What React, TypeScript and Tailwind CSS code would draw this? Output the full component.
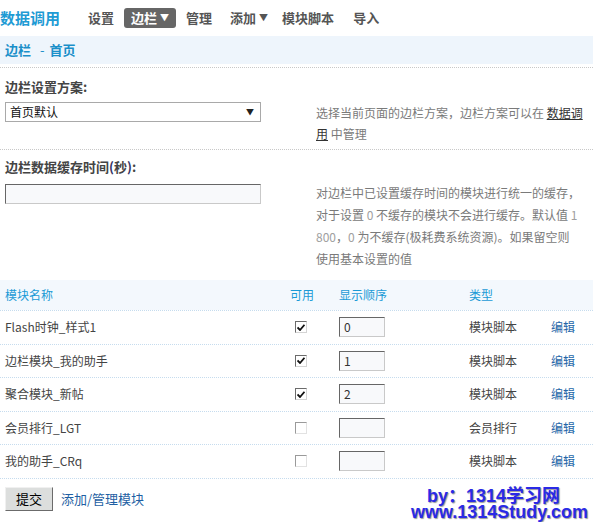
import React from 'react';

const font = { fontFamily: '"Noto Sans CJK SC", "Liberation Sans", sans-serif' };

type Row = { name: string; on: boolean; order: string; type: string };

const rows: Row[] = [
  { name: 'Flash时钟_样式1', on: true, order: '0', type: '模块脚本' },
  { name: '边栏模块_我的助手', on: true, order: '1', type: '模块脚本' },
  { name: '聚合模块_新帖', on: true, order: '2', type: '模块脚本' },
  { name: '会员排行_LGT', on: false, order: '', type: '会员排行' },
  { name: '我的助手_CRq', on: false, order: '', type: '模块脚本' },
];

const Check: React.FC<{ on: boolean }> = ({ on }) =>
  on ? (
    <span className="flex h-[12px] w-[12px] items-center justify-center border border-t-[#6b6b6b] border-l-[#6b6b6b] border-r-[#d4d4d4] border-b-[#d4d4d4] bg-white">
      <svg width="8" height="7" viewBox="0 0 8 7">
        <path d="M0.5 3.5 L3 6 L7.5 0.8" fill="none" stroke="#111" strokeWidth="1.8" />
      </svg>
    </span>
  ) : (
    <span className="block h-[12px] w-[12px] border border-t-[#9a9a9a] border-l-[#9a9a9a] border-r-[#e2e2e2] border-b-[#e2e2e2] bg-white" />
  );

const NavItem: React.FC<{ label: string; drop?: boolean; active?: boolean; className?: string }> = ({
  label,
  drop,
  active,
  className = '',
}) => (
  <span
    className={`flex h-[20px] items-center rounded-[3px] text-[13px] font-bold ${
      active ? 'bg-[#666666] px-[7px] text-white' : 'text-[#555555]'
    } ${className}`}
  >
    {label}
    {drop && <span className="ml-[3px] text-[9px]">▼</span>}
  </span>
);

export default function App() {
  return (
    <div className="relative h-[522px] w-[593px] overflow-hidden bg-white text-[12px] text-[#333333]" style={font}>
      {/* top nav */}
      <div className="flex h-[36px] items-center">
        <span className="mr-[28px] text-[15px] font-bold text-[#1f9bd4]">数据调用</span>
        <NavItem label="设置" className="mr-[10px]" />
        <NavItem label="边栏" drop active className="mr-[10px]" />
        <NavItem label="管理" className="mr-[18px]" />
        <NavItem label="添加" drop className="mr-[14px]" />
        <NavItem label="模块脚本" className="mr-[19px]" />
        <NavItem label="导入" />
      </div>

      {/* breadcrumb */}
      <div className="flex h-[28px] items-center bg-[#eef5fc] pl-[5px] text-[13px] font-bold text-[#1a8fc9]">
        边栏<span className="ml-[9px] mr-[5px] font-normal">-</span>首页
      </div>

      {/* section 1 */}
      <div className="mt-[3px] border-t border-dotted border-[#c8c8c8] px-[5px] pb-[5px] pt-[10px]">
        <div className="h-[18px] text-[13px] font-bold leading-[18px] text-[#444444]">边栏设置方案:</div>
        <div className="mt-[6px] flex">
          <div className="flex h-[20px] w-[256px] items-center justify-between border border-[#a9a9a9] bg-white pl-[4px] pr-[6px]">
            <span className="text-[12px] text-[#111111]">首页默认</span>
            <span className="text-[8px] text-[#222222]">▼</span>
          </div>
          <div className="ml-[55px] w-[272px] leading-[21px] text-[#7a7a7a]">
            <div>
              选择当前页面的边栏方案，边栏方案可以在{' '}
              <span className="text-[#333333] underline">数据调</span>
            </div>
            <div>
              <span className="text-[#333333] underline">用</span> 中管理
            </div>
          </div>
        </div>
      </div>

      {/* section 2 */}
      <div className="border-t border-dotted border-[#c8c8c8] px-[5px] pt-[8px]">
        <div className="h-[18px] text-[13px] font-bold leading-[18px] text-[#444444]">
          边栏数据缓存时间<span className="text-[#333366]">(</span>秒<span className="text-[#333366]">)</span>:
        </div>
        <div className="mt-[6px] flex">
          <div className="mt-[2px] h-[20px] w-[256px] border border-t-[#666666] border-l-[#666666] border-r-[#c9c9c9] border-b-[#c9c9c9] bg-[#f8f9fb]" />
          <div className="ml-[55px] w-[272px] leading-[22px] text-[#7a7a7a]">
            <div>对边栏中已设置缓存时间的模块进行统一的缓存，</div>
            <div>
              对于设置 <span className="text-[#a0a0a0]">0</span> 不缓存的模块不会进行缓存。默认值{' '}
              <span className="text-[#a0a0a0]">1</span>
            </div>
            <div>
              <span className="text-[#a0a0a0]">800</span>，<span className="text-[#a0a0a0]">0</span>{' '}
              为不缓存(极耗费系统资源)。如果留空则
            </div>
            <div>使用基本设置的值</div>
          </div>
        </div>
      </div>

      {/* table */}
      <div className="mt-[10px]">
        <div className="grid h-[30px] grid-cols-[290px_49px_130px_82px_1fr] items-center bg-[#f3f8fd] text-[12px] text-[#1a9ad6]">
          <span className="pl-[5px]">模块名称</span>
          <span>可用</span>
          <span>显示顺序</span>
          <span>类型</span>
          <span />
        </div>
        {rows.map((r) => (
          <div
            key={r.name}
            className="grid h-[33.5px] grid-cols-[290px_49px_130px_82px_1fr] items-center border-t border-dotted border-[#c6dcee] text-[12px] text-[#444444]"
          >
            <span className="pl-[5px]">{r.name}</span>
            <span className="pl-[5px]">
              <Check on={r.on} />
            </span>
            <span>
              <span className="flex h-[20px] w-[46px] items-center border border-t-[#666666] border-l-[#666666] border-r-[#c9c9c9] border-b-[#c9c9c9] bg-[#f8f9fb] pl-[4px] text-[12px] text-[#333333]">
                {r.order}
              </span>
            </span>
            <span>{r.type}</span>
            <span className="text-[#2667a8]">编辑</span>
          </div>
        ))}
        <div className="border-t border-dotted border-[#c6dcee]" />
      </div>

      {/* footer */}
      <div className="mt-[8px] flex items-center pl-[5px]">
        <span className="flex h-[24px] w-[48px] items-center justify-center border border-t-[#f0f0f0] border-l-[#f0f0f0] border-r-[#6b6b6b] border-b-[#6b6b6b] bg-[#dcdedd] text-[13px] text-black">
          提交
        </span>
        <span className="ml-[8px] text-[13px] text-[#1f5fa3]">添加/管理模块</span>
      </div>

      {/* watermark */}
      <div
        className="absolute right-[5px] bottom-[2px] text-right text-[18px] font-bold leading-[16px] text-[#2a2ae6]"
        style={{ fontFamily: '"Liberation Sans", "Noto Sans CJK SC", sans-serif', textShadow: '1px 1px 1px #9a9a9a' }}
      >
        <div className="pr-[28px]">by：1314学习网</div>
        <div>www.1314Study.com</div>
      </div>
    </div>
  );
}
